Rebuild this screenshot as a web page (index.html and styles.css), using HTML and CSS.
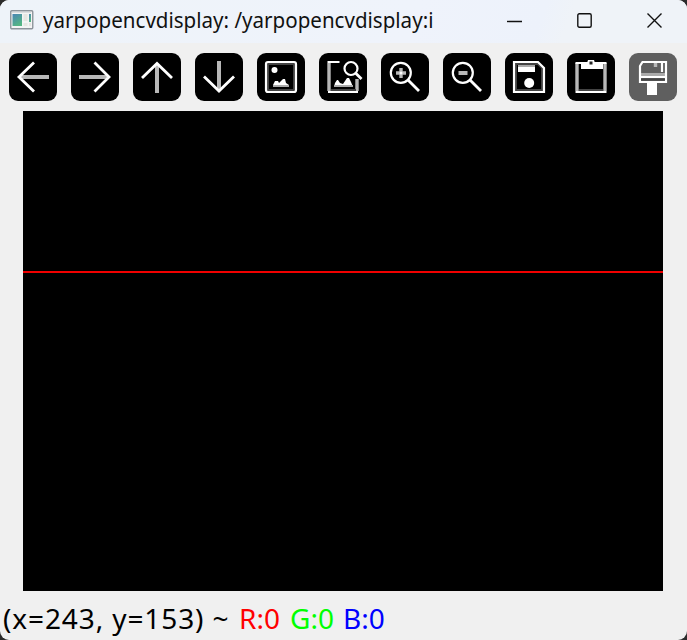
FILE: index.html
```html
<!DOCTYPE html>
<html lang="en">
<head>
<meta charset="utf-8">
<title>yarpopencvdisplay</title>
<link rel="stylesheet" href="styles.css">
</head>
<body>
<div class="window">
  <header class="titlebar">
    <svg class="app-icon" width="24" height="20" viewBox="0 0 24 20">
      <defs>
        <linearGradient id="g" x1="0" y1="0" x2=".5" y2="1"><stop offset="0" stop-color="#4a85b5"/><stop offset="1" stop-color="#55b584"/></linearGradient>
      </defs>
      <rect x=".75" y=".75" width="22" height="18" rx="1" fill="#f4f4f4" stroke="#8d949b" stroke-width="1.4"/>
      <path d="M2 2.2h19" stroke="#cfd2d6"/>
      <rect x="2.5" y="4" width="9.5" height="12" fill="url(#g)"/>
      <path d="M13.5 4h4v7h-4zM13.5 13h4v3h-4zM19 13h2v3h-2z" fill="#e6e6e2"/>
      <rect x="19" y="4" width="2" height="8" fill="url(#g)"/>
    </svg>
    <h1 class="title"><span>yarpopencvdisplay: /yarpopencvdisplay:i</span></h1>
    <div class="controls">
      <svg width="16" height="16" viewBox="0 0 16 16"><path d="M0 8.5h15"/></svg>
      <svg width="16" height="16" viewBox="0 0 16 16"><rect x=".8" y=".8" width="13.4" height="13.4" rx="1.5"/></svg>
      <svg width="16" height="16" viewBox="0 0 16 16"><path d="M.5.5l14 14M14.5.5l-14 14"/></svg>
    </div>
  </header>
  <nav class="toolbar">
    <svg class="tool" viewBox="0 0 48 48"><path class="soft" d="M12 24h28"/><path class="bold" d="M25 9.500L10 24l15 14.500"/></svg>
    <svg class="tool" viewBox="0 0 48 48"><path class="soft" d="M8 24h28"/><path class="bold" d="M23.500 9.500L38 24 23.500 38.500"/></svg>
    <svg class="tool" viewBox="0 0 48 48"><path class="soft" d="M24 12v28"/><path class="bold" d="M9 25L24 10.500 39 25"/></svg>
    <svg class="tool" viewBox="0 0 48 48"><path class="soft" d="M24 8v28"/><path class="bold" d="M9 23.500L24 38l15-14.500"/></svg>
    <svg class="tool" viewBox="0 0 48 48"><rect class="dim" x="11" y="11" width="26" height="26"/><rect x="9" y="9" width="30" height="30" rx="2"/><circle class="fill" cx="17.500" cy="17" r="3"/><path class="light" d="M16 34v-2l2-4h3l1 2 2-2 2-2h2l1 4 3 2v2z"/><path class="softfill" d="M16 32h16v2H16z"/></svg>
    <svg class="tool" viewBox="0 0 48 48"><path class="soft narrow" d="M10 10v28M38 26v12"/><path d="M8.500 9h12M9 39h30"/><path class="dim" d="M12 37h25"/><path class="light" d="M15 34l1-4 2-3h1l2 3 3 1 2-3 2-3h2l2 4 2 5z"/><path class="softfill" d="M15 32h19v2H15z"/><circle cx="32" cy="15.500" r="6.500"/><path class="bold" d="M36.500 20l6 6"/></svg>
    <svg class="tool" viewBox="0 0 48 48"><circle cx="19.800" cy="19.800" r="10"/><path class="bold" d="M27 27l11 11"/><path class="soft narrow" d="M15 20h10M20 15v10"/><circle class="fill" cx="20" cy="20" r="1.500"/></svg>
    <svg class="tool" viewBox="0 0 48 48"><circle cx="19.800" cy="19.800" r="10"/><path class="bold" d="M27 27l11 11"/><path class="soft" d="M15.500 20h9"/></svg>
    <svg class="tool" viewBox="0 0 48 48"><path class="dim" d="M11 38V11h22l4 4v22H10"/><path d="M9 9h24l6 6v24H9z"/><path class="softfill" d="M13 12h17v4H13z"/><path class="fill" d="M13 14h17v5H13z"/><circle class="fill" cx="24.200" cy="30" r="5"/></svg>
    <svg class="tool" viewBox="0 0 48 48"><path class="soft narrow" d="M10 10v28M38 10v28"/><path class="dim" d="M12 37h24"/><path d="M8.500 10h31M8.500 39h31"/><path class="fill" d="M14 11h22v5H14zM20 10l1-3h6l1 3z"/><path class="hole" d="M22.500 8.500h3v3h-3z"/></svg>
    <svg class="tool disabled" viewBox="0 0 48 48"><path class="softfill" d="M12 20h24v3H12z"/><path d="M13.500 9H37v20H11V13z"/><path class="dim" d="M12 26.500h24"/><path class="fill" d="M12 23h24v2H12zM18 28h10v14H18z"/><path d="M33 9v10"/><path class="soft narrow" d="M26.500 10v4"/></svg>
  </nav>
  <main class="view"><div class="line"></div></main>
  <footer class="status"><span class="coords">(x=243, y=153) ~</span><span class="r">R:0</span><span class="g">G:0</span><span class="b">B:0</span></footer>
</div>
</body>
</html>
```
FILE: styles.css
```css
* { box-sizing: border-box; }
body { margin: 0; background: #2b2b2b; }
.window {
  width: 687px;
  height: 640px;
  display: flex;
  flex-direction: column;
  overflow: hidden;
  border-radius: 9px;
  background: #f0f0f0;
  font-family: "Noto Sans", sans-serif;
}
.titlebar {
  height: 43px;
  flex: none;
  display: flex;
  align-items: center;
  padding: 0 24px 3px 10px;
  background: linear-gradient(110deg, #eef3f9, #eff3fb 60%, #edf2fb 78%, #eff3f8 82%);
}
.app-icon { flex: none; margin-right: 9px; }
.title { margin: 0; flex: 1; font-size: 21.5px; font-weight: 400; line-height: 42px; white-space: nowrap; color: #111; }
.title span { display: inline-block; transform: scaleX(.956); transform-origin: left; }
.controls { display: flex; gap: 54px; padding-top: 1px; }
.controls svg { fill: none; stroke: #111; stroke-width: 1.4; }
.toolbar { flex: none; display: flex; gap: 14px; padding: 10px 9px; }
.tool {
  width: 48px;
  height: 48px;
  flex: none;
  border-radius: 9px;
  background: #000;
  fill: none;
  stroke: #fff;
  stroke-width: 2.2;
}
.disabled { background: #5f5f5f; }
.tool .soft { stroke: #b8b8b8; stroke-width: 4; }
.tool .narrow { stroke-width: 3.4; }
.tool .dim { stroke: #444; stroke-width: 2; }
.tool .bold { stroke-width: 2.8; }
.tool .fill, .tool .light { fill: #fff; stroke: none; }
.tool .softfill { fill: #aaa; stroke: none; }
.tool .hole { fill: #222; stroke: none; }
.view { flex: none; width: 640px; height: 480px; margin-left: 23px; padding-top: 160px; background: #000; }
.line { height: 2px; background: #f00000; }
.status { flex: 1; display: flex; padding-left: 3px; font-size: 28px; line-height: 55px; white-space: pre; color: #000; }
.coords { width: 236px; letter-spacing: .9px; }
.r { width: 51px; color: #f00; }
.g { width: 53px; color: #0f0; }
.b { color: #00f; }
```
